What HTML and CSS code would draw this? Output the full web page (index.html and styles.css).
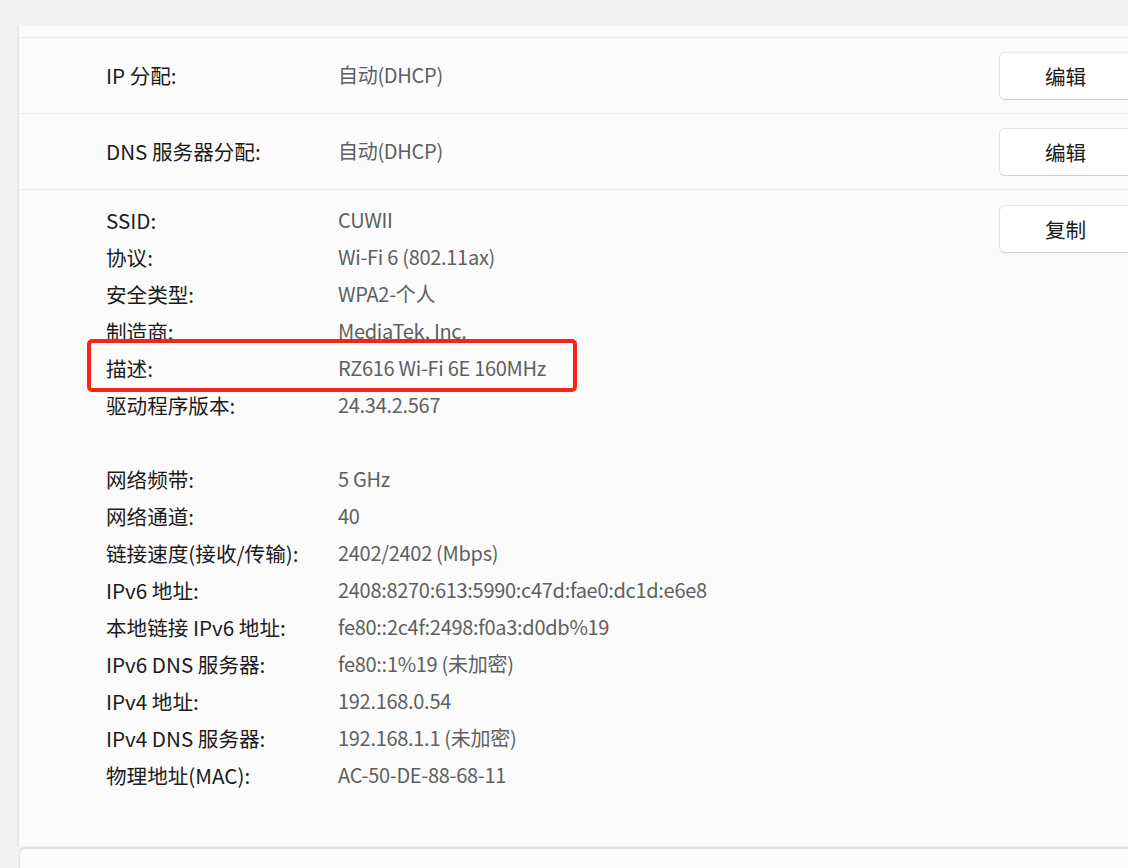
FILE: index.html
```html
<!DOCTYPE html>
<html lang="zh-CN">
<head>
<meta charset="utf-8">
<link rel="stylesheet" href="styles.css">
</head>
<body>
<div class="page">
  <div class="card">
    <div class="prev-row"></div>
    <div class="setting">
      <div class="label">IP 分配:</div>
      <div class="value">自动(DHCP)</div>
      <button class="btn">编辑</button>
    </div>
    <div class="setting">
      <div class="label">DNS 服务器分配:</div>
      <div class="value">自动(DHCP)</div>
      <button class="btn">编辑</button>
    </div>
    <div class="details">
      <div class="grid">
        <div class="label">SSID:</div><div class="value">CUWII</div>
        <div class="label">协议:</div><div class="value">Wi-Fi 6 (802.11ax)</div>
        <div class="label">安全类型:</div><div class="value">WPA2-个人</div>
        <div class="label">制造商:</div><div class="value">MediaTek, Inc.</div>
        <div class="label">描述:</div><div class="value">RZ616 Wi-Fi 6E 160MHz</div>
        <div class="label">驱动程序版本:</div><div class="value">24.34.2.567</div>
        <div class="label blank"></div><div class="value blank"></div>
        <div class="label">网络频带:</div><div class="value">5 GHz</div>
        <div class="label">网络通道:</div><div class="value">40</div>
        <div class="label">链接速度(接收/传输):</div><div class="value">2402/2402 (Mbps)</div>
        <div class="label">IPv6 地址:</div><div class="value">2408:8270:613:5990:c47d:fae0:dc1d:e6e8</div>
        <div class="label">本地链接 IPv6 地址:</div><div class="value">fe80::2c4f:2498:f0a3:d0db%19</div>
        <div class="label">IPv6 DNS 服务器:</div><div class="value">fe80::1%19 (未加密)</div>
        <div class="label">IPv4 地址:</div><div class="value">192.168.0.54</div>
        <div class="label">IPv4 DNS 服务器:</div><div class="value">192.168.1.1 (未加密)</div>
        <div class="label">物理地址(MAC):</div><div class="value">AC-50-DE-88-68-11</div>
      </div>
      <button class="btn copy">复制</button>
      <div class="highlight"></div>
    </div>
  </div>
  <div class="card next"></div>
</div>
</body>
</html>
```

FILE: styles.css
```css
html, body {
  margin: 0;
  padding: 0;
  background: #f3f3f3;
  overflow: hidden;
  height: 868px;
}
body {
  font-family: "Segoe UI", "Noto Sans CJK SC", "Noto Sans", sans-serif;
  font-size: 20px;
  color: #1b1b1b;
}
.page {
  padding-top: 26px;
  padding-left: 17px;
  width: 1300px;
}
.card {
  background: #fbfbfb;
  border-left: 2px solid #e6e6e6;
}
.prev-row {
  height: 11px;
  border-bottom: 1px solid #ececec;
}
.setting {
  position: relative;
  display: flex;
  align-items: center;
  height: 76px;
  box-sizing: border-box;
  padding-left: 87px;
  padding-bottom: 2px;
  border-bottom: 1px solid #ececec;
}
.label {
  width: 232px;
  flex: none;
  color: #1b1b1b;
  font-size: 20.6px;
}
.value {
  color: #5f5f5f;
  letter-spacing: -0.3px;
}
.btn {
  position: absolute;
  left: 980px;
  top: 14px;
  width: 160px;
  height: 48px;
  box-sizing: border-box;
  background: #ffffff;
  border: 1px solid #e4e4e4;
  border-bottom-color: #cfcfcf;
  border-radius: 6px;
  font-family: inherit;
  font-size: 20.6px;
  color: #1b1b1b;
  text-align: left;
  padding-left: 45px;
  padding-bottom: 2px;
}
.details {
  position: relative;
  padding: 11px 0 53px 87px;
}
.grid {
  display: grid;
  grid-template-columns: 232px auto;
  grid-auto-rows: 37px;
  align-items: center;
}
.btn.copy {
  top: 15px;
}
.highlight {
  position: absolute;
  left: 68px;
  top: 149px;
  width: 490px;
  height: 53px;
  box-sizing: border-box;
  border: 4px solid #f8231b;
  border-radius: 5px;
}
.card.next {
  margin-top: 1px;
  margin-left: 2px;
  height: 40px;
  border-left: 1px solid #e3e3e3;
  border-top: 2px solid #e3e3e3;
  border-top-left-radius: 6px;
}
```
